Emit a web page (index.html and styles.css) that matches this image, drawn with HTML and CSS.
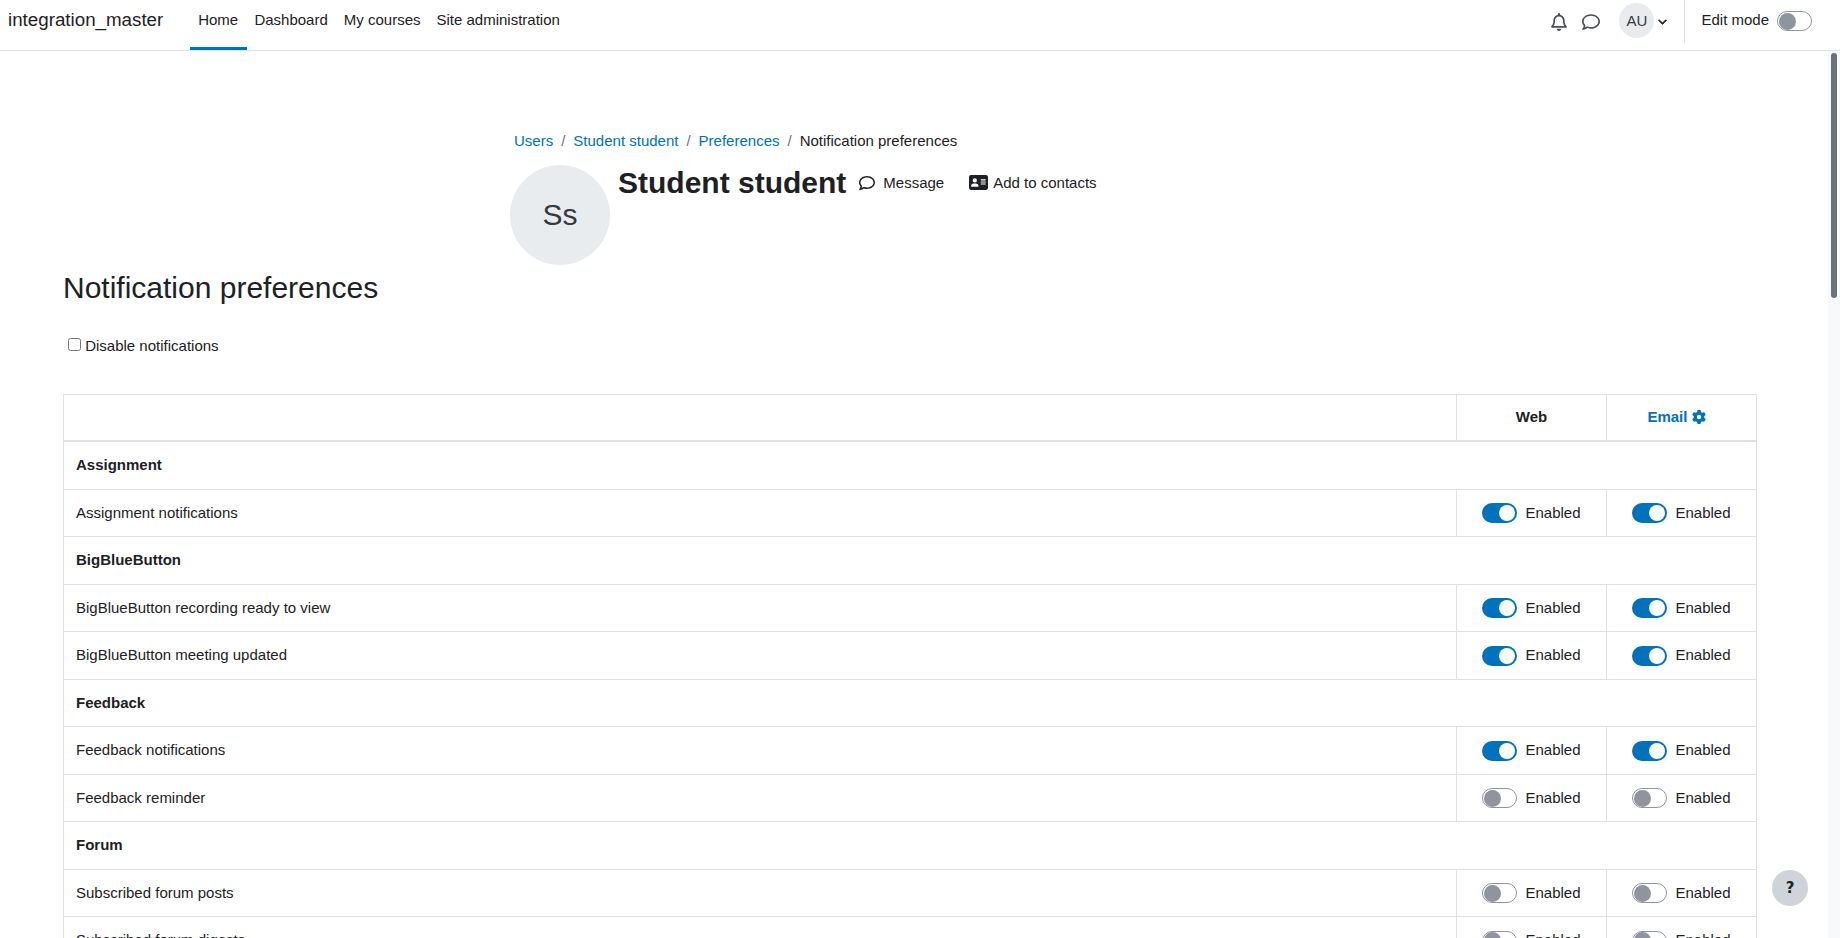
FILE: index.html
```html
<!DOCTYPE html>
<html lang="en">
<head>
<meta charset="utf-8">
<title>Notification preferences</title>
<link rel="stylesheet" href="styles.css">
</head>
<body>
<header class="navbar">
  <a class="brand" href="#">integration_master</a>
  <nav class="primary">
    <a class="nav-link active" href="#">Home</a>
    <a class="nav-link" href="#">Dashboard</a>
    <a class="nav-link" href="#">My courses</a>
    <a class="nav-link" href="#">Site administration</a>
  </nav>
  <div class="nav-right">
    <svg class="ic-bell" viewBox="0 0 448 512"><path d="M224 0c-17.7 0-32 14.3-32 32V51.2C119 66 64 130.6 64 208v25.4c0 45.4-15.5 89.5-43.8 124.9L5.3 377c-5.8 7.2-6.9 17.1-2.9 25.4S14.8 416 24 416H424c9.2 0 17.6-5.3 21.6-13.6s2.9-18.2-2.9-25.4l-14.9-18.6C399.5 322.9 384 278.8 384 233.4V208c0-77.4-55-142-128-156.8V32c0-17.7-14.3-32-32-32zm0 96c61.9 0 112 50.1 112 112v25.4c0 47.9 13.9 94.6 39.7 134.6H72.3C98.1 328 112 281.3 112 233.4V208c0-61.9 50.1-112 112-112zm64 352H224 160c0 17 6.7 33.3 18.7 45.3s28.3 18.7 45.3 18.7s33.3-6.7 45.3-18.7s18.7-28.3 18.7-45.3z"/></svg>
    <svg class="ic-comment" viewBox="0 0 512 512"><path d="M123.6 391.3c12.9-9.4 29.6-11.8 44.6-6.4c26.5 9.6 56.2 15.1 87.8 15.1c124.7 0 208-80.5 208-160s-83.3-160-208-160S48 160.5 48 240c0 32 12.4 62.8 35.7 89.2c8.6 9.7 12.8 22.5 11.8 35.5c-1.4 18.1-5.7 34.7-11.3 49.4c17-7.9 31.1-16.7 39.4-22.7zM21.2 431.9c1.8-2.7 3.5-5.4 5.1-8.1c10-16.6 19.5-38.4 21.4-62.9C17.7 326.8 0 285.1 0 240C0 125.1 114.6 32 256 32s256 93.1 256 208s-114.6 208-256 208c-37.1 0-72.3-6.4-104.1-17.9c-11.9 8.7-31.3 20.6-54.3 30.6c-15.1 6.6-32.3 12.6-50.1 16.1c-.8 .2-1.6 .3-2.4 .5c-4.4 .8-8.7 1.5-13.2 1.9c-.2 0-.5 .1-.7 .1c-5.1 .5-10.2 .8-15.3 .8c-6.5 0-12.3-3.9-14.8-9.9c-2.5-6-1.1-12.8 3.4-17.4c4.1-4.2 7.8-8.7 11.3-13.5c1.7-2.3 3.3-4.6 4.8-6.9c.1-.2 .2-.3 .3-.5z"/></svg>
    <span class="user-initials">AU</span>
    <svg class="ic-chevron" viewBox="0 0 512 512"><path d="M233.4 406.6c12.5 12.5 32.8 12.5 45.3 0l192-192c12.5-12.5 12.5-32.8 0-45.3s-32.8-12.5-45.3 0L256 338.7 86.6 169.4c-12.5-12.5-32.8-12.5-45.3 0s-12.5 32.8 0 45.3l192 192z"/></svg>
    <div class="edit-mode">
      <span>Edit mode</span>
      <span class="toggle off"></span>
    </div>
  </div>
</header>

<main class="page">
  <div class="page-head">
    <ol class="breadcrumb">
      <li><a href="#">Users</a></li>
      <li class="sep">/</li>
      <li><a href="#">Student student</a></li>
      <li class="sep">/</li>
      <li><a href="#">Preferences</a></li>
      <li class="sep">/</li>
      <li>Notification preferences</li>
    </ol>
    <div class="identity">
      <span class="avatar">Ss</span>
      <h1 class="name">Student student</h1>
      <a class="action action-message" href="#">
        <svg class="ic-message" viewBox="0 0 512 512"><path d="M123.6 391.3c12.9-9.4 29.6-11.8 44.6-6.4c26.5 9.6 56.2 15.1 87.8 15.1c124.7 0 208-80.5 208-160s-83.3-160-208-160S48 160.5 48 240c0 32 12.4 62.8 35.7 89.2c8.6 9.7 12.8 22.5 11.8 35.5c-1.4 18.1-5.7 34.7-11.3 49.4c17-7.9 31.1-16.7 39.4-22.7zM21.2 431.9c1.8-2.7 3.5-5.4 5.1-8.1c10-16.6 19.5-38.4 21.4-62.9C17.7 326.8 0 285.1 0 240C0 125.1 114.6 32 256 32s256 93.1 256 208s-114.6 208-256 208c-37.1 0-72.3-6.4-104.1-17.9c-11.9 8.7-31.3 20.6-54.3 30.6c-15.1 6.6-32.3 12.6-50.1 16.1c-.8 .2-1.6 .3-2.4 .5c-4.4 .8-8.7 1.5-13.2 1.9c-.2 0-.5 .1-.7 .1c-5.1 .5-10.2 .8-15.3 .8c-6.5 0-12.3-3.9-14.8-9.9c-2.5-6-1.1-12.8 3.4-17.4c4.1-4.2 7.8-8.7 11.3-13.5c1.7-2.3 3.3-4.6 4.8-6.9c.1-.2 .2-.3 .3-.5z"/></svg>
        Message
      </a>
      <a class="action action-contact" href="#">
        <svg class="ic-card" viewBox="0 0 576 512"><path d="M64 32C28.7 32 0 60.7 0 96V416c0 35.3 28.7 64 64 64H512c35.3 0 64-28.7 64-64V96c0-35.3-28.7-64-64-64H64zm80 256h64c44.2 0 80 35.8 80 80c0 8.8-7.2 16-16 16H80c-8.8 0-16-7.2-16-16c0-44.2 35.8-80 80-80zm-32-96a64 64 0 1 1 128 0 64 64 0 1 1 -128 0zm256-32H496c8.8 0 16 7.2 16 16s-7.2 16-16 16H368c-8.8 0-16-7.2-16-16s7.2-16 16-16zm0 64H496c8.8 0 16 7.2 16 16s-7.2 16-16 16H368c-8.8 0-16-7.2-16-16s7.2-16 16-16zm0 64H496c8.8 0 16 7.2 16 16s-7.2 16-16 16H368c-8.8 0-16-7.2-16-16s7.2-16 16-16z"/></svg>
        Add to contacts
      </a>
    </div>
  </div>

  <h2 class="title">Notification preferences</h2>
  <label class="disable"><input type="checkbox"> Disable notifications</label>

  <table class="prefs">
    <colgroup><col><col class="col-method"><col class="col-method"></colgroup>
    <thead>
      <tr>
        <th></th>
        <th>Web</th>
        <th><a href="#">Email <svg class="ic-gear" viewBox="0 0 512 512"><path d="M495.9 166.6c3.2 8.7 .5 18.4-6.4 24.6l-43.3 39.4c1.1 8.3 1.7 16.8 1.7 25.4s-.6 17.1-1.7 25.4l43.3 39.4c6.9 6.2 9.6 15.9 6.4 24.6c-4.4 11.9-9.7 23.3-15.8 34.3l-4.7 8.1c-6.6 11-14 21.4-22.1 31.2c-5.9 7.2-15.7 9.6-24.5 6.8l-55.7-17.7c-13.4 10.3-28.2 18.9-44 25.4l-12.5 57.1c-2 9.1-9 16.3-18.2 17.8c-13.8 2.3-28 3.5-42.5 3.5s-28.7-1.2-42.5-3.5c-9.2-1.5-16.2-8.7-18.2-17.8l-12.5-57.1c-15.8-6.5-30.6-15.1-44-25.4L83.1 425.9c-8.8 2.8-18.6 .3-24.5-6.8c-8.1-9.8-15.5-20.2-22.1-31.2l-4.7-8.1c-6.1-11-11.4-22.4-15.8-34.3c-3.2-8.7-.5-18.4 6.4-24.6l43.3-39.4C64.6 273.1 64 264.6 64 256s.6-17.1 1.7-25.4L22.4 191.2c-6.9-6.2-9.6-15.9-6.4-24.6c4.4-11.9 9.7-23.3 15.8-34.3l4.7-8.1c6.6-11 14-21.4 22.1-31.2c5.9-7.2 15.7-9.6 24.5-6.8l55.7 17.7c13.4-10.3 28.2-18.9 44-25.4l12.5-57.1c2-9.1 9-16.3 18.2-17.8C227.3 1.2 241.5 0 256 0s28.7 1.2 42.5 3.5c9.2 1.5 16.2 8.7 18.2 17.8l12.5 57.1c15.8 6.5 30.6 15.1 44 25.4l55.7-17.7c8.8-2.8 18.6-.3 24.5 6.8c8.1 9.8 15.5 20.2 22.1 31.2l4.7 8.1c6.1 11 11.4 22.4 15.8 34.3zM256 336a80 80 0 1 0 0-160 80 80 0 1 0 0 160z"/></svg></a></th>
      </tr>
    </thead>
    <tbody>
      <tr><td class="group" colspan="3">Assignment</td></tr>
      <tr><td>Assignment notifications</td><td class="cell"><div class="switch"><span class="toggle on"></span><span>Enabled</span></div></td><td class="cell"><div class="switch"><span class="toggle on"></span><span>Enabled</span></div></td></tr>
      <tr><td class="group" colspan="3">BigBlueButton</td></tr>
      <tr><td>BigBlueButton recording ready to view</td><td class="cell"><div class="switch"><span class="toggle on"></span><span>Enabled</span></div></td><td class="cell"><div class="switch"><span class="toggle on"></span><span>Enabled</span></div></td></tr>
      <tr><td>BigBlueButton meeting updated</td><td class="cell"><div class="switch"><span class="toggle on"></span><span>Enabled</span></div></td><td class="cell"><div class="switch"><span class="toggle on"></span><span>Enabled</span></div></td></tr>
      <tr><td class="group" colspan="3">Feedback</td></tr>
      <tr><td>Feedback notifications</td><td class="cell"><div class="switch"><span class="toggle on"></span><span>Enabled</span></div></td><td class="cell"><div class="switch"><span class="toggle on"></span><span>Enabled</span></div></td></tr>
      <tr><td>Feedback reminder</td><td class="cell"><div class="switch"><span class="toggle off"></span><span>Enabled</span></div></td><td class="cell"><div class="switch"><span class="toggle off"></span><span>Enabled</span></div></td></tr>
      <tr><td class="group" colspan="3">Forum</td></tr>
      <tr><td>Subscribed forum posts</td><td class="cell"><div class="switch"><span class="toggle off"></span><span>Enabled</span></div></td><td class="cell"><div class="switch"><span class="toggle off"></span><span>Enabled</span></div></td></tr>
      <tr><td>Subscribed forum digests</td><td class="cell"><div class="switch"><span class="toggle off"></span><span>Enabled</span></div></td><td class="cell"><div class="switch"><span class="toggle off"></span><span>Enabled</span></div></td></tr>
    </tbody>
  </table>
</main>

<div class="scroll-track"><div class="scroll-thumb"></div></div>
<button class="help" type="button">?</button>
</body>
</html>
```
FILE: styles.css
```css
* { box-sizing: border-box; }
html, body { height: 100%; }
body {
  margin: 0;
  overflow: hidden;
  background: #fff;
  color: #1d2125;
  font-family: "Liberation Sans", Arial, sans-serif;
  font-size: 15px;
  line-height: 22.5px;
}
a { color: #0071bc; text-decoration: none; }

.navbar {
  display: flex;
  align-items: flex-start;
  height: 51px;
  padding-left: 8px;
  border-bottom: 1px solid #dee2e6;
  position: relative;
}
.brand {
  color: #1d2125;
  font-size: 18.75px;
  line-height: 40px;
  width: 182px;
}
.primary { display: flex; height: 50px; }
.nav-link {
  color: #1d2125;
  height: 50px;
  line-height: 40px;
  padding: 0 8px;
  border-bottom: 3px solid transparent;
}
.nav-link.active { border-bottom-color: #0071bc; padding: 0 9px 0 8.2px; margin-right: -0.8px; }
.nav-right {
  display: flex;
  align-items: center;
  margin-left: auto;
  height: 43px;
  padding-right: 28px;
}
.ic-bell { width: 16px; height: 18px; fill: #495057; margin-right: 15px; }
.ic-comment { width: 18px; height: 18px; fill: #495057; margin-right: 19px; }
.user-initials {
  width: 35px;
  height: 35px;
  border-radius: 50%;
  background: #e9ecef;
  color: #343a40;
  text-align: center;
  line-height: 35px;
  margin-top: -3px;
}
.ic-chevron { width: 9px; height: 9px; fill: #1d2125; stroke: #1d2125; stroke-width: 40; margin: 0 1px 0 4px; }
.edit-mode {
  display: flex;
  align-items: center;
  gap: 8px;
  height: 43px;
  margin-left: 16px;
  padding-left: 16px;
  border-left: 1px solid #dee2e6;
}
.edit-mode span:first-child { margin-top: -3px; }
.edit-mode .toggle { margin-top: -1px; }

.toggle {
  display: inline-block;
  position: relative;
  width: 35px;
  height: 20px;
  border-radius: 10px;
  flex: none;
}
.toggle::after {
  content: "";
  position: absolute;
  border-radius: 50%;
}
.toggle.on { background: #0071bc; }
.toggle.on::after { width: 16px; height: 16px; top: 2px; right: 2px; background: #fff; }
.toggle.off { background: #fff; border: 1px solid #8f959e; }
.toggle.off::after { width: 17px; height: 17px; top: 0.5px; left: 1px; background: #8f959e; }

.page { padding: 79px 84px 0 63px; }
.page-head { margin-left: 447px; }
.breadcrumb {
  display: flex;
  gap: 8px;
  list-style: none;
  margin: 0;
  padding: 0 0 0 4px;
}
.sep { color: #6a737b; }
.identity {
  display: flex;
  align-items: flex-start;
  margin-top: 12.5px;
  height: 100px;
}
.avatar {
  width: 100px;
  height: 100px;
  border-radius: 50%;
  background: #e9ecef;
  color: #343a40;
  font-size: 30px;
  line-height: 100px;
  text-align: center;
  margin-right: 8px;
  flex: none;
}
.name {
  margin: -0.5px 13px 0 0;
  font-size: 30px;
  line-height: 36px;
  font-weight: 700;
}
.action {
  display: flex;
  align-items: center;
  color: #1d2125;
  margin-top: 6.5px;
}
.action-message { gap: 8px; margin-right: 25px; }
.action-contact { gap: 5px; }
.ic-message { width: 16px; height: 16px; fill: #1d2125; }
.ic-card { width: 19px; height: 17px; fill: #1d2125; }

.title {
  margin: 5px 0 0;
  font-size: 30px;
  line-height: 36px;
  font-weight: 400;
}
.disable {
  display: block;
  margin: 29px 0 0;
  padding-left: 5px;
}
.disable input { width: 13px; height: 13px; margin: 0; vertical-align: 0; }

.prefs {
  width: 1694px;
  margin-top: 36.5px;
  border-collapse: collapse;
  table-layout: fixed;
  border: 1px solid #dee2e6;
}
.col-method { width: 150px; }
.prefs th, .prefs td {
  padding: 12px;
  border: 1px solid #dee2e6;
}
.prefs thead th {
  padding-top: 11.4px;
  padding-bottom: 11.5px;
  border-bottom-width: 2px;
  text-align: center;
  font-weight: 700;
}
.ic-gear { width: 14px; height: 14px; fill: #0071bc; vertical-align: -1.5px; margin: 0 10px 0 0; }
.group { font-weight: 700; }
.prefs .cell { padding-left: 0; padding-right: 0; }
.switch {
  display: flex;
  justify-content: center;
  align-items: center;
  gap: 8px;
  height: 22.5px;
  white-space: nowrap;
}

.scroll-track {
  position: fixed;
  top: 51px;
  right: 0;
  bottom: 0;
  width: 12px;
  background: #f8f9fa;
}
.scroll-thumb {
  position: absolute;
  top: 2px;
  left: 3px;
  width: 6px;
  height: 245px;
  border-radius: 3px;
  background: #6a737b;
}
.help {
  position: fixed;
  left: 1772px;
  top: 870px;
  width: 36px;
  height: 36px;
  padding: 0;
  border: 0;
  border-radius: 50%;
  background: #ced4da;
  color: #1d2125;
  font-family: "DejaVu Sans", sans-serif;
  font-size: 15px;
  font-weight: 700;
  line-height: 36px;
}
```
